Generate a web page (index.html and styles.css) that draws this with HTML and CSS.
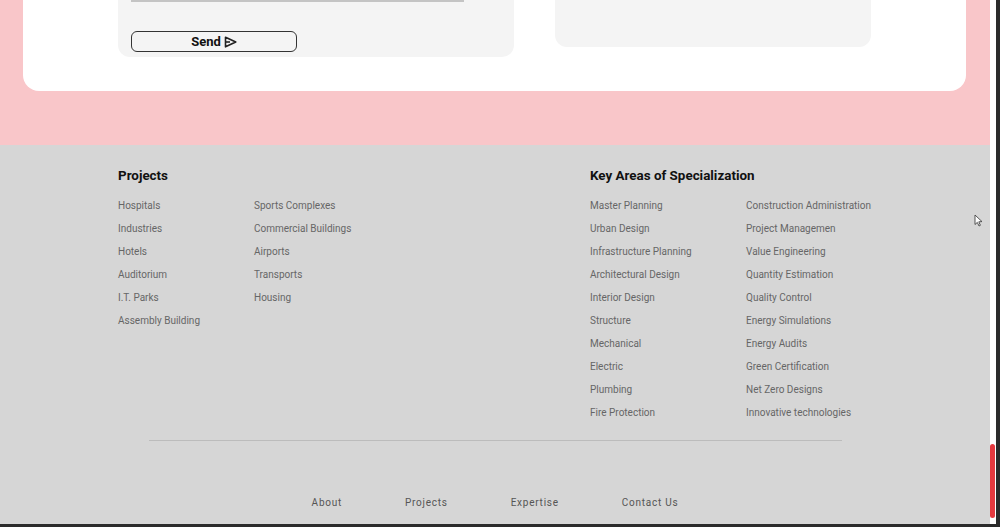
FILE: index.html
```html
<!DOCTYPE html>
<html lang="en">
<head>
    <meta charset="utf-8">
    <meta name="viewport" content="width=device-width, initial-scale=1.0">
    <title>Contact</title>
    <link rel="stylesheet" href="styles.css">
</head>
<body>
    <div class="window">
        <div class="page">
            <section class="contact">
                <div class="panel">
                    <div class="card form-card">
                        <div class="field-line"></div>
                        <button class="send-btn">Send
                            <svg width="13" height="12" viewBox="0 0 13 12" fill="none" stroke="#222" stroke-width="1.6" stroke-linejoin="round">
                                <path d="M1.5 1.2 L11.8 6 L1.5 10.8 Z"/>
                                <path d="M1.5 6 H6"/>
                            </svg>
                        </button>
                    </div>
                    <div class="card info-card"></div>
                </div>
            </section>

            <footer class="footer">
                <div class="footer-groups">
                    <div class="group projects">
                        <h3>Projects</h3>
                        <div class="cols">
                            <ul>
                                <li>Hospitals</li>
                                <li>Industries</li>
                                <li>Hotels</li>
                                <li>Auditorium</li>
                                <li>I.T. Parks</li>
                                <li>Assembly Building</li>
                            </ul>
                            <ul>
                                <li>Sports Complexes</li>
                                <li>Commercial Buildings</li>
                                <li>Airports</li>
                                <li>Transports</li>
                                <li>Housing</li>
                            </ul>
                        </div>
                    </div>
                    <div class="group areas">
                        <h3>Key Areas of Specialization</h3>
                        <div class="cols">
                            <ul>
                                <li>Master Planning</li>
                                <li>Urban Design</li>
                                <li>Infrastructure Planning</li>
                                <li>Architectural Design</li>
                                <li>Interior Design</li>
                                <li>Structure</li>
                                <li>Mechanical</li>
                                <li>Electric</li>
                                <li>Plumbing</li>
                                <li>Fire Protection</li>
                            </ul>
                            <ul>
                                <li>Construction Administration</li>
                                <li>Project Managemen</li>
                                <li>Value Engineering</li>
                                <li>Quantity Estimation</li>
                                <li>Quality Control</li>
                                <li>Energy Simulations</li>
                                <li>Energy Audits</li>
                                <li>Green Certification</li>
                                <li>Net Zero Designs</li>
                                <li>Innovative technologies</li>
                            </ul>
                        </div>
                    </div>
                </div>

                <hr class="divider">

                <nav class="footer-nav">
                    <a href="#">About</a>
                    <a href="#">Projects</a>
                    <a href="#">Expertise</a>
                    <a href="#">Contact Us</a>
                </nav>
            </footer>
        </div>
        <div class="scrollbar"><div class="thumb"></div></div>
        <div class="frame-edge"></div>
    </div>
    <div class="frame-bottom"></div>

    <!-- mouse pointer captured in the screenshot -->
    <svg class="pointer" width="9" height="13" viewBox="0 0 9 13">
        <path d="M1 1 L1 10.5 L3.3 8.4 L5 12 L6.4 11.3 L4.8 7.8 L8 7.6 Z" fill="#fff" stroke="#444" stroke-width="0.9" stroke-linejoin="round"/>
    </svg>
</body>
</html>
```

FILE: styles.css
```css
* {
    box-sizing: border-box;
}
html, body {
    margin: 0;
    height: 527px;
    overflow: hidden;
}
body {
    font-family: Roboto, "Liberation Sans", Arial, sans-serif;
    background: #2b2b2b;
    display: flex;
    flex-direction: column;
    position: relative;
}
.window {
    display: flex;
    height: 524px;
}
.page {
    flex: 1;
    display: flex;
    flex-direction: column;
}
.scrollbar {
    width: 6px;
    background: #fff;
    display: flex;
    flex-direction: column;
    justify-content: flex-end;
    padding-bottom: 6px;
}
.thumb {
    height: 74px;
    background: #e5393f;
    border-radius: 3px;
    margin: 0 1px 0 0;
}
.frame-edge {
    width: 4px;
    background: #2b2b2b;
}
.frame-bottom {
    height: 3px;
    background: #2b2b2b;
}
.pointer {
    position: absolute;
    left: 974px;
    top: 214px;
}

/* contact section */
.contact {
    height: 145px;
    background: #f9c6c9;
    padding: 0 24px 0 23px;
}
.panel {
    height: 91px;
    background: #fff;
    border-radius: 0 0 16px 16px;
    display: flex;
    align-items: flex-start;
    padding-left: 95px;
    gap: 41px;
}
.card {
    background: #f4f4f4;
    border-radius: 0 0 12px 12px;
}
.form-card {
    width: 396px;
    height: 57px;
    padding: 0 13px;
}
.field-line {
    width: 333px;
    height: 2px;
    background: #c4c4c4;
}
.send-btn {
    margin-top: 29px;
    width: 166px;
    height: 21px;
    border: 1.5px solid #333;
    border-radius: 6px;
    background: #f4f4f4;
    font-family: Roboto, "Liberation Sans", Arial, sans-serif;
    font-weight: bold;
    font-size: 13px;
    color: #111;
    display: flex;
    align-items: center;
    justify-content: center;
    gap: 3px;
    padding: 0;
}
.info-card {
    width: 316px;
    height: 47px;
}

/* footer */
.footer {
    flex: 1;
    background: #d6d6d6;
    padding-top: 22px;
}
.footer-groups {
    display: flex;
    padding-left: 118px;
}
.group h3 {
    margin: 0 0 10px;
    font-size: 13.4px;
    font-weight: bold;
    color: #111;
    line-height: 17px;
}
.projects {
    width: 472px;
}
.cols {
    display: flex;
}
.cols ul {
    list-style: none;
    margin: 0;
    padding: 0;
}
.projects ul:first-child {
    width: 136px;
}
.areas ul:first-child {
    width: 156px;
}
.cols li {
    font-size: 10px;
    line-height: 23px;
    color: #666;
}
.divider {
    width: 693px;
    margin: 16px auto 0;
    border: 0;
    border-top: 1px solid #bcbcbc;
}
.footer-nav {
    display: flex;
    justify-content: center;
    gap: 63px;
    margin-top: 56px;
}
.footer-nav a {
    font-size: 10px;
    letter-spacing: 0.75px;
    color: #555;
    text-decoration: none;
}
```
